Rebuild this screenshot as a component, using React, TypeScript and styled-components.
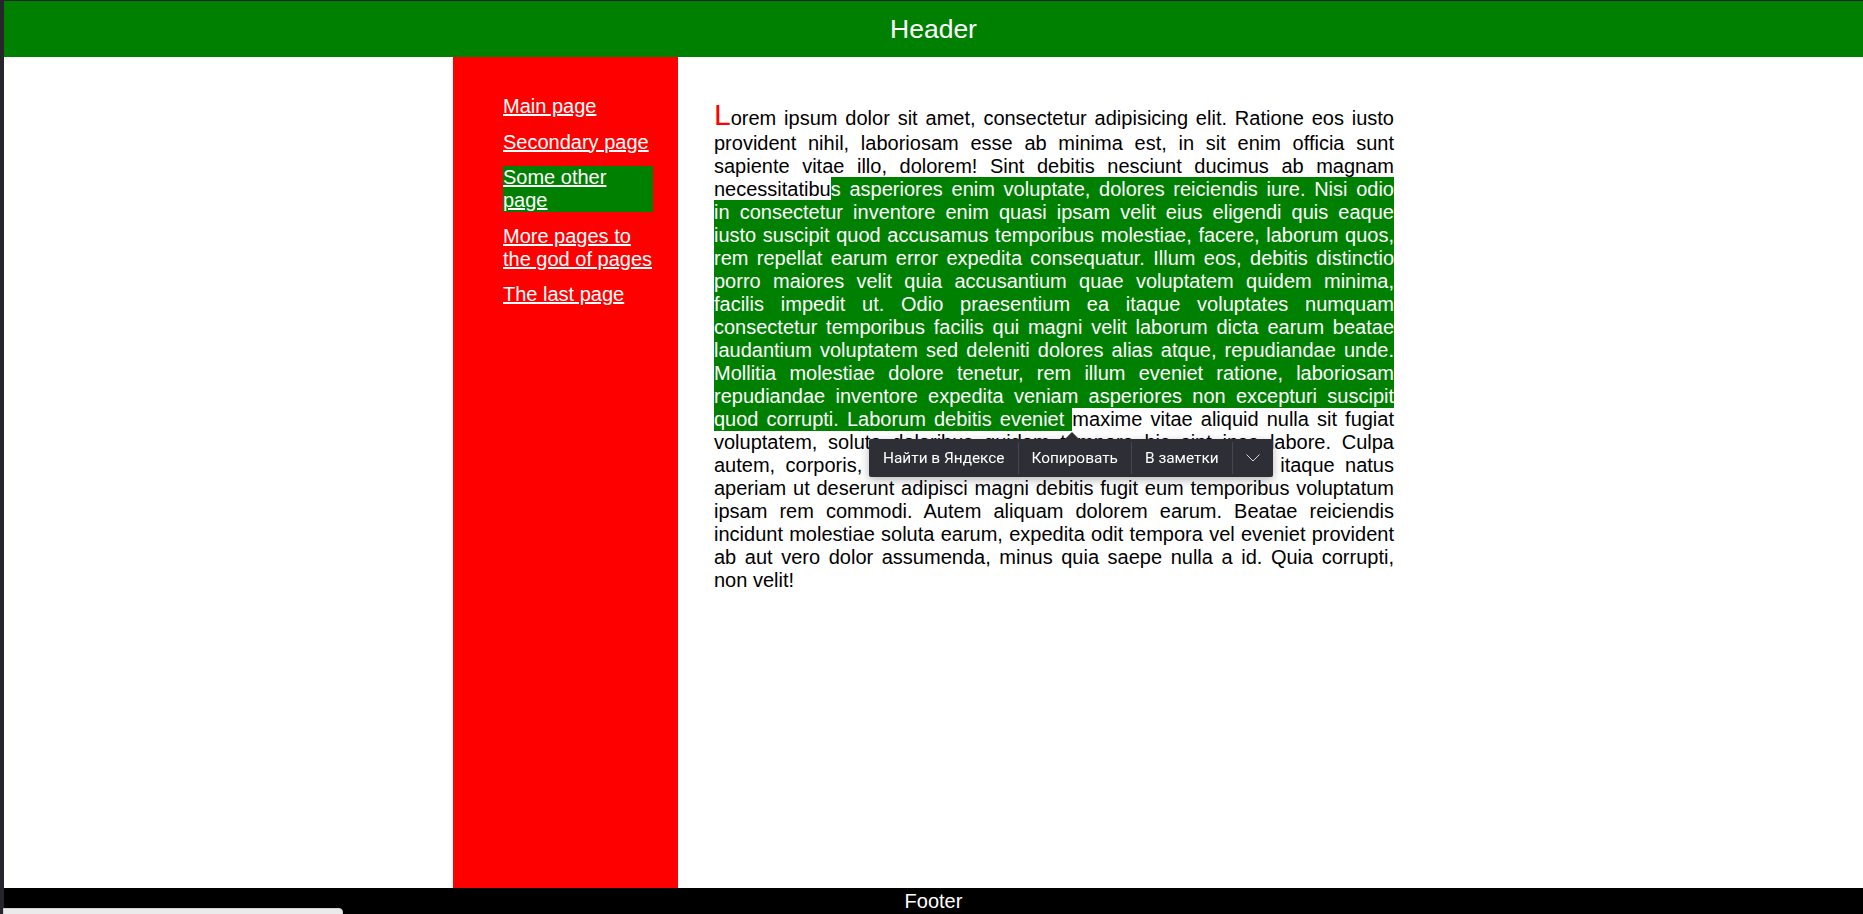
import React from 'react';
import styled, { createGlobalStyle } from 'styled-components';

const Global = createGlobalStyle`
  html, body { margin: 0; padding: 0; height: 100%; }
  body {
    background: #24262c;
    font-family: "Liberation Sans", Arial, sans-serif;
    overflow: hidden;
  }
  #root { height: 100%; }
`;

const Page = styled.div`
  margin: 1px 0 0 4px;
  height: calc(100vh - 1px);
  background: #fff;
  display: flex;
  flex-direction: column;
`;

const Header = styled.header`
  flex: none;
  height: 56px;
  background: #008000;
  color: #fff;
  display: flex;
  align-items: center;
  justify-content: center;
  font-size: 26.5px;
`;

const Middle = styled.div`
  flex: 1;
  min-height: 0;
  display: flex;
  padding-left: 449px;
`;

const Sidebar = styled.nav`
  flex: none;
  width: 225px;
  box-sizing: border-box;
  background: #ff0000;
  padding: 38px 25px 0 50px;
`;

const NavList = styled.ul`
  list-style: none;
  margin: 0;
  padding: 0;
  display: flex;
  flex-direction: column;
  gap: 12.5px;
`;

const NavLink = styled.a<{ $active?: boolean }>`
  display: block;
  color: #fff;
  font-size: 20px;
  line-height: 23px;
  text-decoration: underline;
  background: ${(p) => (p.$active ? '#008000' : 'transparent')};
`;

const Main = styled.main`
  padding: 41px 0 0 36px;
  width: 680px;
`;

const Text = styled.p`
  margin: 0;
  font-size: 20px;
  line-height: normal;
  color: #000;
`;

const Line = styled.span<{ $last?: boolean }>`
  display: block;
  white-space: nowrap;
  text-align: ${(p) => (p.$last ? 'left' : 'justify')};
  text-align-last: ${(p) => (p.$last ? 'left' : 'justify')};
`;

const Initial = styled.span`
  color: #ff0000;
  font-size: 30px;
`;

const Selected = styled.span`
  background: #008000;
  color: #fff;
  padding: 1px 0;
`;

const Footer = styled.footer`
  flex: none;
  height: 26px;
  background: #000;
  color: #fff;
  font-size: 20px;
  line-height: 26px;
  text-align: center;
`;

const Popup = styled.div`
  position: fixed;
  left: 869px;
  top: 439px;
  height: 38px;
  display: flex;
  align-items: stretch;
  background: #2e2f36;
  border-radius: 2px;
  box-shadow: 0 3px 10px rgba(0, 0, 0, 0.28);
  font-family: Roboto, "Noto Sans", sans-serif;
  font-size: 15.4px;
  color: #fff;

  &::before {
    content: '';
    position: absolute;
    top: -7px;
    left: 196px;
    border-left: 7px solid transparent;
    border-right: 7px solid transparent;
    border-bottom: 7px solid #2e2f36;
  }
`;

const PopupItem = styled.div<{ $sep?: boolean }>`
  position: relative;
  display: flex;
  align-items: center;
  padding: 0 13px 0 14px;
  white-space: nowrap;

  &::before {
    content: '';
    display: ${(p) => (p.$sep ? 'block' : 'none')};
    position: absolute;
    left: 0;
    top: 3px;
    bottom: 3px;
    width: 1px;
    background: #46474e;
  }
`;

const StatusBubble = styled.div`
  position: fixed;
  left: 3px;
  top: 908px;
  width: 340px;
  height: 20px;
  box-sizing: border-box;
  background: #ebebeb;
  border: 1px solid #d2d2d2;
  border-radius: 0 4px 0 0;
`;

const links = [
  { label: 'Main page' },
  { label: 'Secondary page' },
  { label: 'Some other page', active: true },
  { label: 'More pages to the god of pages' },
  { label: 'The last page' },
];

type Seg = { t: string; sel?: boolean };

const lines: Seg[][] = [
  [{ t: 'orem ipsum dolor sit amet, consectetur adipisicing elit. Ratione eos iusto' }],
  [{ t: 'provident nihil, laboriosam esse ab minima est, in sit enim officia sunt' }],
  [{ t: 'sapiente vitae illo, dolorem! Sint debitis nesciunt ducimus ab magnam' }],
  [
    { t: 'necessitatibu' },
    { t: 's asperiores enim voluptate, dolores reiciendis iure. Nisi odio', sel: true },
  ],
  [{ t: 'in consectetur inventore enim quasi ipsam velit eius eligendi quis eaque', sel: true }],
  [{ t: 'iusto suscipit quod accusamus temporibus molestiae, facere, laborum quos,', sel: true }],
  [{ t: 'rem repellat earum error expedita consequatur. Illum eos, debitis distinctio', sel: true }],
  [{ t: 'porro maiores velit quia accusantium quae voluptatem quidem minima,', sel: true }],
  [{ t: 'facilis impedit ut. Odio praesentium ea itaque voluptates numquam', sel: true }],
  [{ t: 'consectetur temporibus facilis qui magni velit laborum dicta earum beatae', sel: true }],
  [{ t: 'laudantium voluptatem sed deleniti dolores alias atque, repudiandae unde.', sel: true }],
  [{ t: 'Mollitia molestiae dolore tenetur, rem illum eveniet ratione, laboriosam', sel: true }],
  [{ t: 'repudiandae inventore expedita veniam asperiores non excepturi suscipit', sel: true }],
  [
    { t: 'quod corrupti. Laborum debitis eveniet ', sel: true },
    { t: 'maxime vitae aliquid nulla sit fugiat' },
  ],
  [{ t: 'voluptatem, soluta doloribus quidem tempora hic sint ipsa labore. Culpa' }],
  [{ t: 'autem, corporis, nostrum eligendi quaerat dolorum voluptas itaque natus' }],
  [{ t: 'aperiam ut deserunt adipisci magni debitis fugit eum temporibus voluptatum' }],
  [{ t: 'ipsam rem commodi. Autem aliquam dolorem earum. Beatae reiciendis' }],
  [{ t: 'incidunt molestiae soluta earum, expedita odit tempora vel eveniet provident' }],
  [{ t: 'ab aut vero dolor assumenda, minus quia saepe nulla a id. Quia corrupti,' }],
  [{ t: 'non velit!' }],
];

export default function App() {
  return (
    <>
      <Global />
      <Page>
        <Header>Header</Header>
        <Middle>
          <Sidebar>
            <NavList>
              {links.map((l) => (
                <li key={l.label}>
                  <NavLink href="#" $active={l.active}>
                    {l.label}
                  </NavLink>
                </li>
              ))}
            </NavList>
          </Sidebar>
          <Main>
            <Text>
              {lines.map((segs, i) => (
                <Line key={i} $last={i === lines.length - 1}>
                  {i === 0 && <Initial>L</Initial>}
                  {segs.map((s, j) =>
                    s.sel ? <Selected key={j}>{s.t}</Selected> : <React.Fragment key={j}>{s.t}</React.Fragment>
                  )}
                </Line>
              ))}
            </Text>
          </Main>
        </Middle>
        <Footer>Footer</Footer>
      </Page>
      <Popup>
        <PopupItem>Найти в Яндексе</PopupItem>
        <PopupItem $sep>Копировать</PopupItem>
        <PopupItem $sep>В заметки</PopupItem>
        <PopupItem $sep>
          <svg width="14" height="8" viewBox="0 0 14 8" fill="none">
            <polyline points="0.5,0.5 7,7 13.5,0.5" stroke="#d8d8dc" strokeWidth="1" />
          </svg>
        </PopupItem>
      </Popup>
      <StatusBubble />
    </>
  );
}
